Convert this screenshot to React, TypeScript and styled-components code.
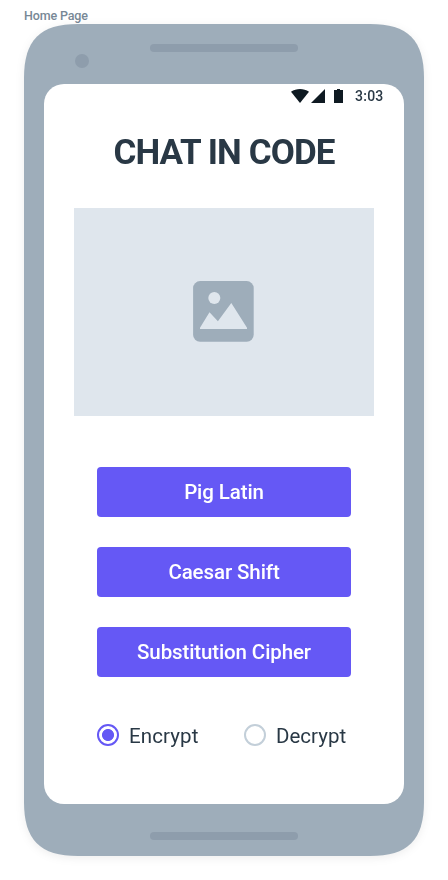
import React, { useState } from "react";
import styled, { createGlobalStyle } from "styled-components";

const GlobalStyle = createGlobalStyle`
  * { box-sizing: border-box; }
  body { margin: 0; background: #fff; font-family: Roboto, "Liberation Sans", sans-serif; color: #293845; }
`;

const Page = styled.main`
  width: 448px;
  height: 880px;
  padding: 8px 24px 0;
  overflow: hidden;
`;

const FrameLabel = styled.div`
  height: 16px;
  font-size: 12.5px;
  line-height: 16px;
  font-weight: 500;
  letter-spacing: -0.15px;
  color: #788896;
`;

const PhoneShadow = styled.div`
  filter: drop-shadow(0 2px 4px rgba(0, 0, 0, 0.07));
`;

const Phone = styled.section`
  width: 400px;
  height: 832px;
  padding: 0 20px;
  display: flex;
  flex-direction: column;
  background: #9eadba;
  clip-path: path("M0 54C0 16 16 0 54 0H346C384 0 400 16 400 54V778C400 816 384 832 346 832H54C16 832 0 816 0 778Z");
`;

const Bezel = styled.div<{ $height: number }>`
  height: ${(p) => p.$height}px;
  flex: none;
  display: grid;
  grid-template-columns: 106px 148px 106px;
  align-items: start;
`;

const Camera = styled.span`
  width: 14px;
  height: 14px;
  margin: 30px 0 0 31px;
  border-radius: 50%;
  background: #8e9dac;
`;

const Speaker = styled.span<{ $top: number }>`
  grid-column: 2;
  height: 8px;
  margin-top: ${(p) => p.$top}px;
  border-radius: 4px;
  background: #8e9dac;
`;

const Screen = styled.div`
  height: 720px;
  flex: none;
  display: flex;
  flex-direction: column;
  align-items: center;
  border-radius: 20px;
  background: #fff;
`;

const StatusBar = styled.div`
  width: 100%;
  height: 24px;
  padding-right: 21px;
  display: flex;
  justify-content: flex-end;
  align-items: center;
`;

const StatusIcons = styled.svg`
  display: block;
  margin-right: 11px;
`;

const Clock = styled.span`
  width: 28px;
  font-size: 14px;
  font-weight: 500;
  line-height: 24px;
  letter-spacing: 0.25px;
  white-space: nowrap;
`;

const Title = styled.h1`
  margin: 23px 0 0;
  height: 44px;
  font-size: 35px;
  line-height: 44px;
  font-weight: 700;
  letter-spacing: -0.9px;
  white-space: nowrap;
`;

const Placeholder = styled.div`
  width: 300px;
  height: 208px;
  margin-top: 33px;
  padding: 73px 119px;
  background: #dfe6ed;
`;

const PictureIcon = styled.svg`
  display: block;
`;

const Actions = styled.div`
  width: 254px;
  margin-top: 51px;
  display: flex;
  flex-direction: column;
  gap: 30px;
`;

const CipherButton = styled.button<{ $tracking: number }>`
  height: 50px;
  padding: 0;
  border: 0;
  border-radius: 4px;
  background: #6558f5;
  color: #fff;
  font: 500 20.5px/50px Roboto, "Liberation Sans", sans-serif;
  letter-spacing: ${(p) => p.$tracking}px;
`;

const Modes = styled.div`
  width: 254px;
  margin-top: 46px;
  display: grid;
  grid-template-columns: 147px 107px;
`;

const Mode = styled.label<{ $tracking: number }>`
  height: 24px;
  display: flex;
  align-items: center;
  gap: 10px;
  font-size: 20.5px;
  line-height: 24px;
  letter-spacing: ${(p) => p.$tracking}px;
  white-space: nowrap;
`;

const ModeName = styled.span`
  padding-top: 2px;
`;

const Radio = styled.input`
  appearance: none;
  flex: none;
  width: 22px;
  height: 22px;
  margin: 0;
  border: 2px solid #c3cfd9;
  border-radius: 50%;
  background: #fff;
  &:checked {
    border-color: #6558f5;
    background: radial-gradient(circle, #6558f5 5.6px, #fff 6.4px);
  }
`;

const ciphers = [
  { name: "Pig Latin", tracking: -0.1 },
  { name: "Caesar Shift", tracking: -0.1 },
  { name: "Substitution Cipher", tracking: -0.12 },
];

const modes = [
  { name: "Encrypt", tracking: 0.1 },
  { name: "Decrypt", tracking: 0 },
];

export default function App() {
  const [mode, setMode] = useState("Encrypt");
  return (
    <>
      <GlobalStyle />
      <Page>
        <FrameLabel>Home Page</FrameLabel>
        <PhoneShadow>
          <Phone>
            <Bezel $height={60}>
              <Camera />
              <Speaker $top={20} />
            </Bezel>
            <Screen>
              <StatusBar>
                <StatusIcons width="53" height="14" viewBox="0 0 53 14" fill="#0f1a22">
                  <path d="M0 2.8C5.3-.9 12.7-.9 18 2.8L9 14Z" />
                  <path d="M34 0V14H20Z" />
                  <path d="M43 1H46V0H49V1H52V14H43Z" />
                </StatusIcons>
                <Clock>3:03</Clock>
              </StatusBar>
              <Title>CHAT IN CODE</Title>
              <Placeholder>
                <PictureIcon width="61" height="61" viewBox="0 0 61 61">
                  <rect x="0.1" y="0.1" width="60.6" height="60.6" rx="7" fill="#9eadba" />
                  <circle cx="21.3" cy="17" r="6" fill="#dfe6ed" />
                  <path d="M7 48V46.7L16.5 31.2L24.9 40.2L38.3 22L54 46.7V48Z" fill="#dfe6ed" />
                </PictureIcon>
              </Placeholder>
              <Actions>
                {ciphers.map((c) => (
                  <CipherButton key={c.name} $tracking={c.tracking}>{c.name}</CipherButton>
                ))}
              </Actions>
              <Modes>
                {modes.map((m) => (
                  <Mode key={m.name} $tracking={m.tracking}>
                    <Radio type="radio" name="mode" checked={mode === m.name} onChange={() => setMode(m.name)} />
                    <ModeName>{m.name}</ModeName>
                  </Mode>
                ))}
              </Modes>
            </Screen>
            <Bezel $height={52}>
              <Speaker $top={28} />
            </Bezel>
          </Phone>
        </PhoneShadow>
      </Page>
    </>
  );
}
